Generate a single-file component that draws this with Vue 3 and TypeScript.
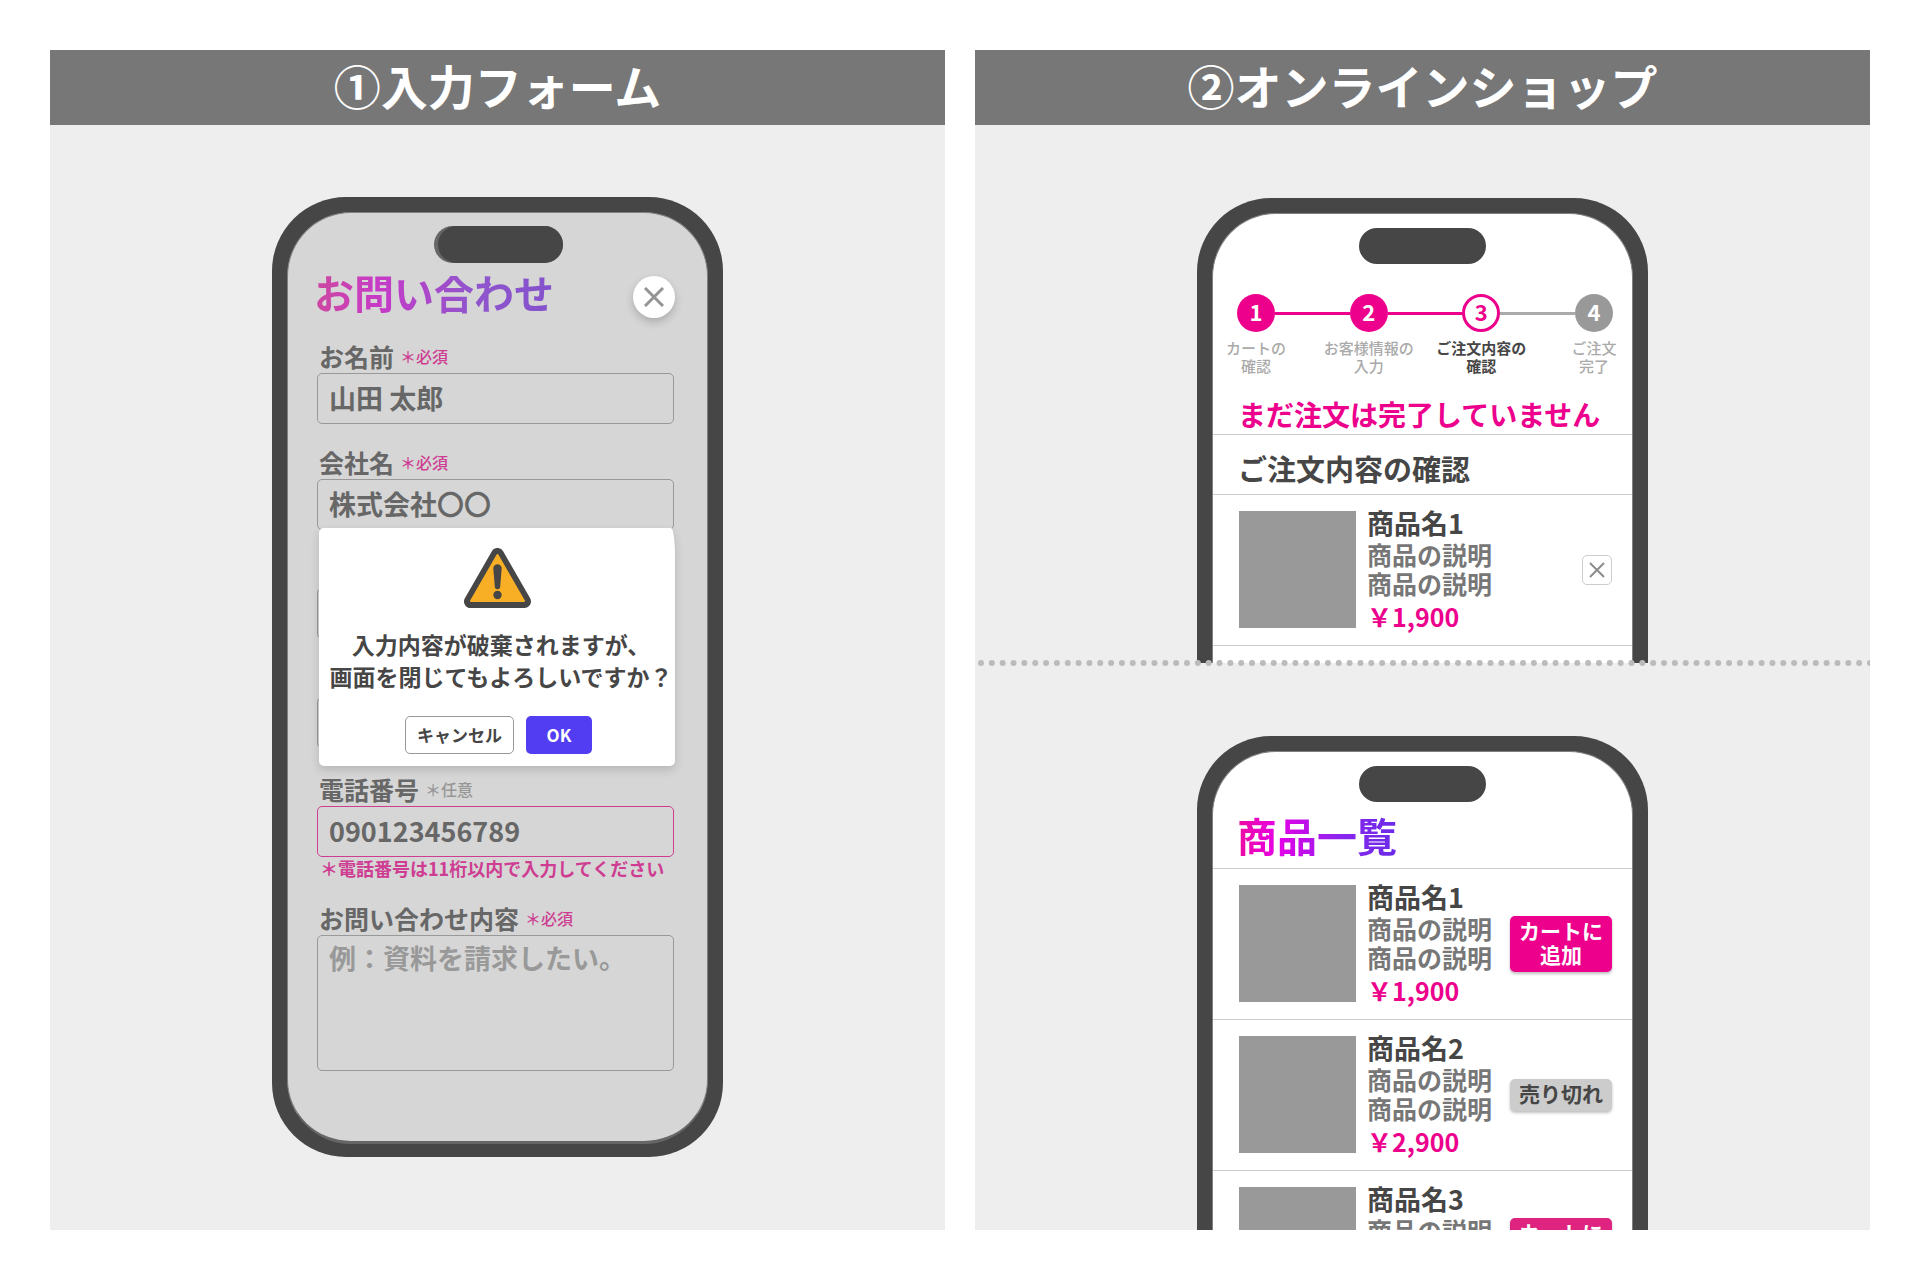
<script setup lang="ts">
import { ref } from 'vue'

interface Step {
  no: number
  lines: [string, string]
  state: 'done' | 'current' | 'todo'
}

interface Product {
  name: string
  price: string
  soldOut: boolean
  pressed: boolean
}

const steps: Step[] = [
  { no: 1, lines: ['カートの', '確認'], state: 'done' },
  { no: 2, lines: ['お客様情報の', '入力'], state: 'done' },
  { no: 3, lines: ['ご注文内容の', '確認'], state: 'current' },
  { no: 4, lines: ['ご注文', '完了'], state: 'todo' },
]

const products: Product[] = [
  { name: '商品名1', price: '￥1,900', soldOut: false, pressed: false },
  { name: '商品名2', price: '￥2,900', soldOut: true, pressed: false },
  { name: '商品名3', price: '￥3,900', soldOut: false, pressed: true },
]

const cart = products.slice(0, 1)

const fullName = ref('山田 太郎')
const company = ref('株式会社〇〇')
const department = ref('')
const email = ref('')
const phone = ref('090123456789')
const message = ref('')
</script>

<template>
  <main class="board">
    <section class="panel">
      <h1 class="panel-title">①入力フォーム</h1>
      <div class="stage stage-form">
        <div class="phone phone-full">
          <div class="screen screen-dim">
            <div class="island-shadow"><div class="island"></div></div>
            <header class="form-head">
              <h2 class="gradient-title gradient-dim">お問い合わせ</h2>
              <button type="button" class="close" aria-label="閉じる">
                <svg width="20" height="20" viewBox="0 0 20 20" aria-hidden="true">
                  <path d="M1 1 19 19M19 1 1 19" stroke="#949494" stroke-width="3" fill="none" />
                </svg>
              </button>
            </header>
            <form class="form" @submit.prevent>
              <div class="group">
                <div class="field">
                  <label for="f-name">お名前<small class="required">＊必須</small></label>
                  <input id="f-name" v-model="fullName" type="text" />
                </div>
                <div class="field">
                  <label for="f-company">会社名<small class="required">＊必須</small></label>
                  <input id="f-company" v-model="company" type="text" />
                </div>
              </div>
              <div class="field field-bare">
                <input v-model="department" type="text" aria-label="部署名" />
              </div>
              <div class="field field-bare">
                <input v-model="email" type="email" aria-label="メールアドレス" />
              </div>
              <div class="field">
                <label for="f-phone">電話番号<small class="optional">＊任意</small></label>
                <input id="f-phone" v-model="phone" class="invalid" type="tel" aria-describedby="f-phone-error" />
                <p id="f-phone-error" class="error">＊電話番号は11桁以内で入力してください</p>
              </div>
              <div class="field">
                <label for="f-message">お問い合わせ内容<small class="required">＊必須</small></label>
                <textarea id="f-message" v-model="message" placeholder="例：資料を請求したい。"></textarea>
              </div>
            </form>

            <div class="dialog" role="alertdialog" aria-labelledby="dialog-text">
              <svg class="warning" width="67" height="60" viewBox="0 0 67 60" aria-hidden="true">
                <path d="M33.5 6.5 6.5 53.5H60.5Z" fill="#464646" stroke="#464646" stroke-width="13" stroke-linejoin="round" />
                <path d="M33.5 7 7 53H60Z" fill="#f9af25" stroke="#f9af25" stroke-width="2" stroke-linejoin="round" />
                <path d="M29.3 20.5a4.2 4.2 0 0 1 8.4 0L36.2 38.5a2.7 2.7 0 0 1-5.4 0Z" fill="#464646" />
                <circle cx="33.5" cy="47" r="4.2" fill="#464646" />
              </svg>
              <p id="dialog-text">入力内容が破棄されますが、<br />画面を閉じてもよろしいですか？</p>
              <div class="dialog-actions">
                <button type="button" class="cancel">キャンセル</button>
                <button type="button" class="ok">OK</button>
              </div>
            </div>
          </div>
        </div>
      </div>
    </section>

    <section class="panel">
      <h1 class="panel-title">②オンラインショップ</h1>
      <div class="stage stage-top">
        <div class="phone">
          <div class="screen">
            <div class="island"></div>
            <ol class="steps">
              <li v-for="step in steps" :key="step.no" :class="step.state">
                <span class="step-no">{{ step.no }}</span>
                <span class="step-label">{{ step.lines[0] }}<br />{{ step.lines[1] }}</span>
              </li>
            </ol>
            <p class="notice">まだ注文は完了していません</p>
            <h2 class="section-title">ご注文内容の確認</h2>
            <ul class="products">
              <li v-for="item in cart" :key="item.name">
                <div class="thumb"></div>
                <div class="info">
                  <h3>{{ item.name }}</h3>
                  <p>商品の説明<br />商品の説明</p>
                  <strong>{{ item.price }}</strong>
                </div>
                <button type="button" class="remove" aria-label="削除">
                  <svg width="16" height="16" viewBox="0 0 16 16" aria-hidden="true">
                    <path d="M1 1 15 15M15 1 1 15" stroke="#8c8c8c" stroke-width="2" fill="none" />
                  </svg>
                </button>
              </li>
            </ul>
          </div>
        </div>
      </div>
      <svg class="dots" height="8" aria-hidden="true">
        <line x1="6" y1="4" x2="100%" y2="4" pathLength="82" stroke="#bbb" stroke-width="6" stroke-linecap="round" stroke-dasharray="0 1" />
      </svg>
      <div class="stage stage-bottom">
        <div class="phone">
          <div class="screen">
            <div class="island"></div>
            <h2 class="gradient-title list-title"><span>商品一覧</span></h2>
            <ul class="products">
              <li v-for="item in products" :key="item.name">
                <div class="thumb"></div>
                <div class="info">
                  <h3>{{ item.name }}</h3>
                  <p>商品の説明<br />商品の説明</p>
                  <strong>{{ item.price }}</strong>
                </div>
                <button v-if="item.soldOut" type="button" class="cart sold" disabled>売り切れ</button>
                <button v-else type="button" class="cart" :class="{ pressed: item.pressed }">カートに<br />追加</button>
              </li>
            </ul>
          </div>
        </div>
      </div>
    </section>
  </main>
</template>

<style>
body {
  margin: 0;
  background: #fff;
}
</style>

<style scoped>
* {
  box-sizing: border-box;
}

.board {
  display: grid;
  grid-template-columns: 1fr 1fr;
  gap: 30px;
  min-height: 100vh;
  padding: 50px;
  color: #464646;
  font-family: "Noto Sans CJK JP", "Noto Sans", sans-serif;
  font-weight: 700;
}

h1, h2, h3, p, ul, ol {
  margin: 0;
  padding: 0;
  font-weight: inherit;
}

ul, ol {
  list-style: none;
}

button, input, textarea {
  font: inherit;
  color: inherit;
}

.panel {
  display: flex;
  flex-direction: column;
  min-width: 0;
  background: #eee;
}

.panel-title {
  flex: none;
  height: 75px;
  background: #777;
  color: #fff;
  font-size: 47px;
  line-height: 70px;
  text-align: center;
}

.stage {
  display: flex;
  justify-content: center;
}

.stage-form {
  padding: 72px 0;
}

.stage-top {
  flex: none;
  height: 538px;
  padding-top: 73px;
  overflow: hidden;
}

.dots {
  position: relative;
  flex: none;
  width: 100%;
  height: 8px;
  margin: -4px 0;
}

.stage-bottom {
  flex: 1 1 0px;
  min-height: 0;
  padding-top: 73px;
  overflow: hidden;
}

.phone {
  flex: none;
  width: 451px;
  padding: 15px 15px 0;
  border-radius: 74px 74px 0 0;
  background: #464646;
}

.phone-full {
  padding-bottom: 13px;
  border-radius: 74px;
}

.screen {
  position: relative;
  min-height: 100%;
  border: 1px solid #808080;
  border-bottom: 0;
  border-radius: 64px 64px 0 0;
  background: #fff;
}

.screen-dim {
  min-height: 0;
  padding: 0 33px 70px 29px;
  border-bottom: 3px solid #666;
  border-radius: 64px;
  background: #d6d6d6;
  color: #676767;
}

.island {
  width: 127px;
  height: 36px;
  margin: 14px auto 0;
  border-radius: 18px;
  background: #464646;
}

.island-shadow {
  width: 129px;
  height: 37px;
  margin: 13px 0 0 117px;
  padding-left: 4px;
  border-radius: 19px;
  background: #666;
}

.island-shadow .island {
  width: 125px;
  height: 37px;
  margin: 0;
  border-radius: 19px;
}

/* contact form */
.form-head {
  display: flex;
  justify-content: space-between;
  align-items: flex-start;
  margin: 13px 0 26px -3px;
}

.gradient-title {
  font-size: 40px;
}

.gradient-dim {
  padding-bottom: 10px;
  line-height: 32px;
  background: linear-gradient(90deg, #cd48a0, #c63ac8 28%, #9155cc 65%, #8352cc);
  background-clip: text;
  -webkit-text-fill-color: transparent;
}

.close {
  display: grid;
  place-items: center;
  width: 42px;
  height: 42px;
  margin-right: -1px;
  padding: 0;
  border: 0;
  border-radius: 50%;
  background: #fff;
  box-shadow: 0 4px 8px rgba(0, 0, 0, 0.2);
}

.form {
  display: flex;
  flex-direction: column;
  gap: 29px;
}

.group {
  display: flex;
  flex-direction: column;
  gap: 26px;
}

.field {
  display: flex;
  flex-direction: column;
}

.field-bare {
  padding-top: 29px;
}

.field label {
  display: flex;
  align-items: center;
  gap: 6px;
  height: 24px;
  margin: 0 0 5px 2px;
  font-size: 25px;
  line-height: 24px;
}

.field small {
  font-size: 16px;
  font-weight: 500;
  line-height: 24px;
}

.required {
  color: #ce3d92;
}

.optional {
  color: #969696;
}

.field input,
.field textarea {
  width: 100%;
  height: 51px;
  padding: 0 11px;
  border: 1px solid #999;
  border-radius: 5px;
  outline: 0;
  background: transparent;
  font-size: 27px;
}

.field input {
  padding-bottom: 2px;
}

.field input.invalid {
  border-color: #ce3d92;
}

.field textarea {
  display: block;
  height: 136px;
  padding: 7px 11px;
  line-height: 30px;
  resize: none;
}

.field textarea::placeholder {
  color: #999;
  opacity: 1;
}

.error {
  margin: 2px 0 0 3px;
  color: #ce3d92;
  font-size: 18px;
  line-height: 18px;
  white-space: nowrap;
}

/* confirmation dialog lying over the form */
.dialog {
  position: absolute;
  top: 315px;
  right: 32px;
  left: 31px;
  display: flex;
  flex-direction: column;
  align-items: center;
  padding: 20px 0 12px;
  border-radius: 5px 4px 5px 5px / 5px 28px 5px 5px;
  background: #fff;
  box-shadow: 0 4px 10px rgba(0, 0, 0, 0.15);
  color: #464646;
}

.dialog p {
  margin: 20px 0 24px;
  padding-left: 8px;
  font-size: 23px;
  line-height: 32px;
  text-align: center;
  white-space: nowrap;
}

.dialog-actions {
  display: flex;
  gap: 12px;
  padding-left: 3px;
}

.dialog-actions button {
  height: 38px;
  padding: 0;
  border-radius: 5px;
  font-size: 17px;
  line-height: 34px;
}

.cancel {
  width: 109px;
  border: 1px solid #999;
  background: #fff;
}

.dialog-actions .ok {
  width: 66px;
  border: 0;
  background: #533df3;
  color: #fff;
}

/* order progress */
.steps {
  display: flex;
  justify-content: space-between;
  margin: 30px 19px 0 24px;
}

.steps li {
  position: relative;
  display: flex;
  flex-direction: column;
  align-items: center;
  width: 38px;
  color: #aaa;
}

.steps li:not(:last-child)::after {
  content: "";
  position: absolute;
  top: 18px;
  left: 38px;
  width: 75px;
  height: 3px;
  background: #aaa;
}

.steps .done:not(:last-child)::after {
  background: #ec008c;
}

.step-no {
  width: 38px;
  height: 38px;
  border-radius: 50%;
  background: #999;
  color: #fff;
  font-size: 22px;
  line-height: 34px;
  text-align: center;
}

.done .step-no {
  background: #ec008c;
}

.current .step-no {
  border: 3px solid #ec008c;
  background: #fff;
  color: #ec008c;
  line-height: 28px;
}

.step-label {
  margin-top: 7px;
  font-size: 15px;
  font-weight: 500;
  line-height: 18px;
  text-align: center;
  white-space: nowrap;
}

.steps .current {
  color: #464646;
}

.current .step-label {
  font-weight: 700;
}

.notice {
  margin-top: 19px;
  padding-left: 25px;
  border-bottom: 1px solid #ccc;
  color: #ec008c;
  font-size: 28px;
  line-height: 40px;
}

.section-title {
  padding: 8px 0 0 25px;
  border-bottom: 1px solid #ccc;
  font-size: 29px;
  line-height: 51px;
}

.list-title {
  padding-left: 24px;
  border-bottom: 1px solid #ccc;
  line-height: 66px;
}

.list-title span {
  display: inline-block;
  height: 66px;
  vertical-align: top;
  background: linear-gradient(90deg, #ee0ca0, #e600e6 25%, #8a25ee 65%, #6a2be8);
  background-clip: text;
  -webkit-text-fill-color: transparent;
}

/* product rows */
.products li {
  display: flex;
  align-items: center;
  gap: 11px;
  padding: 10px 20px 11px 26px;
  border-bottom: 1px solid #ccc;
}

.thumb {
  flex: none;
  width: 117px;
  height: 117px;
  background: #999;
}

.info {
  flex: 1;
  white-space: nowrap;
}

.info h3 {
  font-size: 27px;
  line-height: 35px;
}

.info p {
  color: #777;
  font-size: 25px;
  line-height: 29px;
}

.info strong {
  display: block;
  color: #ec008c;
  font-size: 25px;
  font-weight: inherit;
  line-height: 36px;
}

.remove {
  display: grid;
  place-items: center;
  width: 30px;
  height: 30px;
  padding: 0;
  border: 1px solid #ccc;
  border-radius: 5px;
  background: #fff;
}

.cart {
  flex: none;
  width: 102px;
  padding: 2px 0 6px;
  border: 0;
  border-radius: 5px;
  background: #ec008c;
  box-shadow: 0 2px 3px rgba(0, 0, 0, 0.25);
  color: #fff;
  font-size: 21px;
  line-height: 24px;
}

.cart.pressed {
  background: #de2480;
}

.cart.sold {
  background: #ccc;
  color: #464646;
}
</style>
